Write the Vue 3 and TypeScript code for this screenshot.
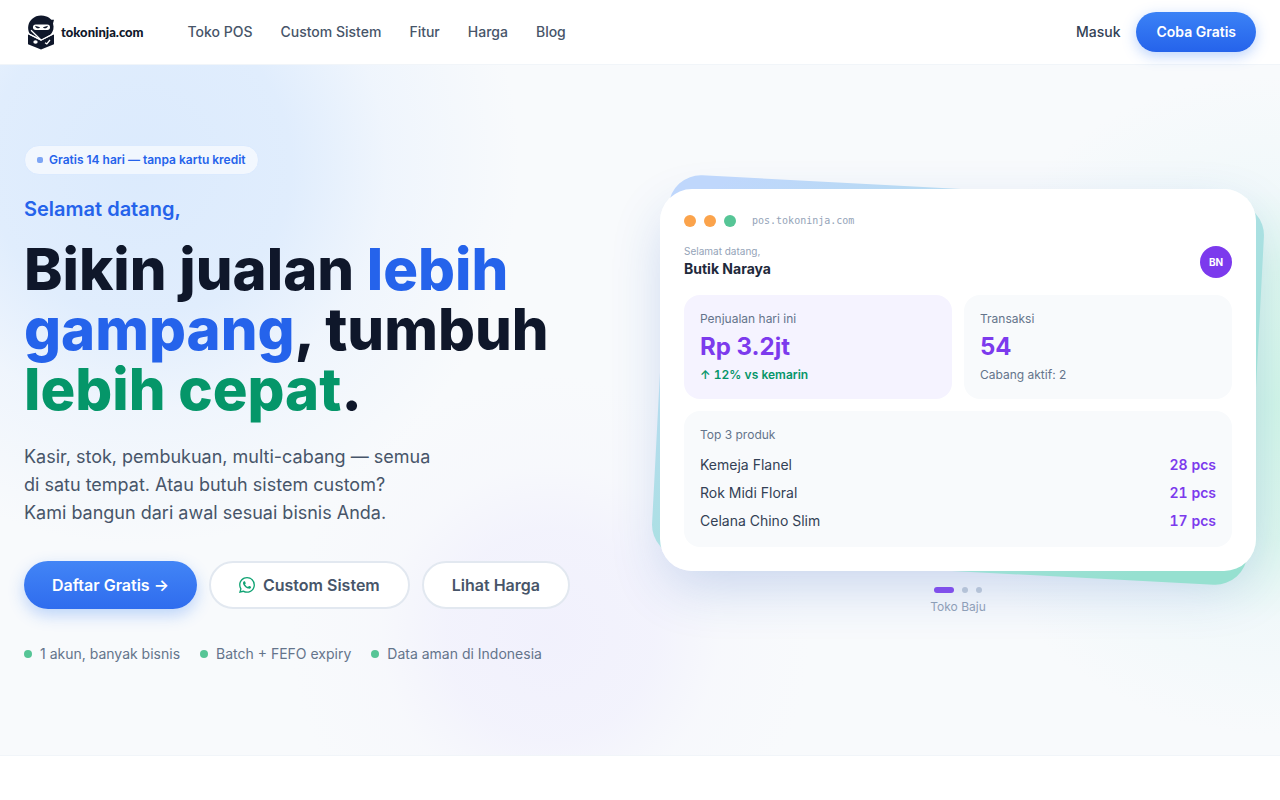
<script setup lang="ts">
interface Product {
  name: string
  sold: number
}

const navLinks: string[] = ['Toko POS', 'Custom Sistem', 'Fitur', 'Harga', 'Blog']
const perks: string[] = ['1 akun, banyak bisnis', 'Batch + FEFO expiry', 'Data aman di Indonesia']
const products: Product[] = [
  { name: 'Kemeja Flanel', sold: 28 },
  { name: 'Rok Midi Floral', sold: 21 },
  { name: 'Celana Chino Slim', sold: 17 },
]
const slides: string[] = ['Toko Baju', 'Slide 2', 'Slide 3']
</script>

<template>
  <div class="page">
    <header class="header">
      <div class="container header-row">
        <a class="logo" href="#">
          <svg class="logo-mark" viewBox="0 0 34 36" aria-hidden="true">
            <path fill="#0f172a" d="M5.500 19.500C3 14.500 4 8.500 8 5c4-3.600 9.500-4.400 14.500-2.400 1.800.700 3.500 1.800 4.800 3.200l2.700 0-1 3.600c1.300 4 .300 8-2.300 11L17.500 25.500z" />
            <rect x="9" y="10.500" width="17" height="5.400" rx="2.700" fill="#fff" />
            <path fill="#0f172a" d="M11 11.800l5 1.400c-.700 1.700-4 1.700-5-1.400zM24 11.800l-5 1.400c.700 1.700 4 1.700 5-1.400z" />
            <path fill="#0f172a" d="M4 20.200 17 26.800v8.700L4 30.200z" />
            <path fill="#0f172a" d="M30 20.200 17 26.800v8.700l13-5.300z" />
            <path fill="none" stroke="#fff" stroke-width="1.200" d="M3 19 17 26.200 31 19M7 16.200 17 26" />
            <ellipse cx="11.500" cy="28" rx="2.200" ry="1.700" fill="#fff" />
            <path fill="none" stroke="#fff" stroke-width="1.300" d="m21 28.800 1.800 1 3.200-3.800" />
          </svg>
          <span class="logo-text">tokoninja.com</span>
        </a>
        <nav class="nav" aria-label="Utama">
          <a v-for="link in navLinks" :key="link" href="#">{{ link }}</a>
        </nav>
        <div class="account">
          <a class="login" href="#">Masuk</a>
          <a class="trial" href="#">Coba Gratis</a>
        </div>
      </div>
    </header>

    <main class="hero">
      <div class="glow glow-blue"></div>
      <div class="glow glow-violet"></div>
      <div class="glow glow-green"></div>
      <div class="container hero-grid">
        <section class="intro">
          <p class="badge"><span class="badge-dot"></span>Gratis 14 hari — tanpa kartu kredit</p>
          <p class="welcome">Selamat datang,</p>
          <h1>
            Bikin jualan <span class="blue">lebih gampang</span>, tumbuh
            <span class="green">lebih cepat</span>.
          </h1>
          <p class="lead">
            Kasir, stok, pembukuan, multi-cabang — semua<br />
            di satu tempat. Atau butuh sistem custom?<br />
            Kami bangun dari awal sesuai bisnis Anda.
          </p>
          <div class="actions">
            <a class="btn primary" href="#">Daftar Gratis →</a>
            <a class="btn outline" href="#">
              <svg class="wa" viewBox="0 0 24 24" fill="#10a373" aria-hidden="true">
                <path d="M17.472 14.382c-.297-.149-1.758-.867-2.030-.967-.273-.099-.471-.148-.670.150-.197.297-.767.966-.940 1.164-.173.199-.347.223-.644.075-.297-.150-1.255-.463-2.390-1.475-.883-.788-1.480-1.761-1.653-2.059-.173-.297-.018-.458.130-.606.134-.133.298-.347.446-.520.149-.174.198-.298.298-.497.099-.198.050-.371-.025-.520-.075-.149-.669-1.612-.916-2.207-.242-.579-.487-.500-.669-.510-.173-.008-.371-.010-.570-.010-.198 0-.520.074-.792.372-.272.297-1.040 1.016-1.040 2.479 0 1.462 1.065 2.875 1.213 3.074.149.198 2.096 3.200 5.077 4.487.709.306 1.262.489 1.694.625.712.227 1.360.195 1.871.118.571-.085 1.758-.719 2.006-1.413.248-.694.248-1.289.173-1.413-.074-.124-.272-.198-.570-.347m-5.421 7.403h-.004a9.870 9.870 0 01-5.031-1.378l-.361-.214-3.741.982.998-3.648-.235-.374a9.860 9.860 0 01-1.510-5.260c.001-5.450 4.436-9.884 9.888-9.884 2.640 0 5.122 1.030 6.988 2.898a9.825 9.825 0 012.893 6.994c-.003 5.450-4.437 9.884-9.885 9.884m8.413-18.297A11.815 11.815 0 0012.050 0C5.495 0 .160 5.335.157 11.892c0 2.096.547 4.142 1.588 5.945L.057 24l6.305-1.654a11.882 11.882 0 005.683 1.448h.005c6.554 0 11.890-5.335 11.893-11.893a11.821 11.821 0 00-3.480-8.413z" />
              </svg>
              Custom Sistem
            </a>
            <a class="btn outline" href="#">Lihat Harga</a>
          </div>
          <ul class="perks">
            <li v-for="perk in perks" :key="perk">{{ perk }}</li>
          </ul>
        </section>

        <section class="showcase" aria-label="Contoh kasir">
          <div class="stack">
            <div class="backdrop"></div>
            <div class="card">
              <div class="window-bar">
                <i class="orange"></i><i class="orange"></i><i class="mint"></i>
                <span class="address">pos.tokoninja.com</span>
              </div>
              <div class="shop">
                <div>
                  <p class="shop-hello">Selamat datang,</p>
                  <p class="shop-name">Butik Naraya</p>
                </div>
                <span class="avatar">BN</span>
              </div>
              <div class="stats">
                <div class="panel lilac">
                  <p class="label">Penjualan hari ini</p>
                  <p class="value">Rp 3.2jt</p>
                  <p class="label up">↑ 12% vs kemarin</p>
                </div>
                <div class="panel">
                  <p class="label">Transaksi</p>
                  <p class="value">54</p>
                  <p class="label">Cabang aktif: 2</p>
                </div>
              </div>
              <div class="panel">
                <p class="label">Top 3 produk</p>
                <ul class="products">
                  <li v-for="product in products" :key="product.name">
                    <span>{{ product.name }}</span>
                    <strong>{{ product.sold }} pcs</strong>
                  </li>
                </ul>
              </div>
            </div>
          </div>
          <div class="pager">
            <button
              v-for="(slide, i) in slides"
              :key="slide"
              type="button"
              :class="{ active: i === 0 }"
              :aria-label="slide"
            ></button>
          </div>
          <p class="caption">{{ slides[0] }}</p>
        </section>
      </div>
    </main>
  </div>
</template>

<style>
body {
  margin: 0;
  background: #fff;
}
</style>

<style scoped>
.page {
  font-family: Inter, 'Liberation Sans', sans-serif;
  color: #0f172a;
  font-size: 14px;
  line-height: 20px;
}
.page * {
  box-sizing: border-box;
}
p,
h1,
ul {
  margin: 0;
  padding: 0;
  list-style: none;
}
a {
  color: inherit;
  text-decoration: none;
}
.container {
  max-width: 1280px;
  margin: 0 auto;
  padding: 0 24px;
}
.header {
  position: relative;
  z-index: 2;
  border-bottom: 1px solid #f1f5f9;
}
.header-row {
  display: flex;
  align-items: center;
  height: 64px;
}
.logo {
  display: flex;
  align-items: center;
  gap: 3px;
}
.logo-mark {
  width: 34px;
  height: 36px;
}
.logo-text {
  font-family: Lato, sans-serif;
  font-weight: 900;
  font-size: 13px;
}
.nav {
  display: flex;
  gap: 28px;
  margin-left: 44px;
  font-weight: 500;
  color: #475569;
}
.account {
  display: flex;
  align-items: center;
  gap: 16px;
  margin-left: auto;
}
.login {
  font-weight: 500;
  color: #334155;
}
.trial {
  padding: 10px 20px;
  border-radius: 20px;
  font-weight: 600;
  color: #fff;
  background: linear-gradient(#3b82f6, #2563eb);
  box-shadow: 0 4px 14px rgba(59, 130, 246, 0.35);
}
.hero {
  position: relative;
  overflow: hidden;
  padding: 80px 0;
  background: #f8fafc;
  border-bottom: 1px solid #f1f5f9;
}
.glow {
  position: absolute;
  border-radius: 50%;
}
.glow-blue {
  left: -240px;
  top: -280px;
  width: 760px;
  height: 760px;
  background: radial-gradient(closest-side, rgba(191, 219, 254, 0.5), rgba(191, 219, 254, 0.42) 40%, rgba(219, 234, 254, 0.3) 65%, rgba(219, 234, 254, 0));
}
.glow-violet {
  left: 290px;
  top: 310px;
  width: 520px;
  height: 520px;
  background: radial-gradient(closest-side, rgba(221, 214, 254, 0.26), rgba(221, 214, 254, 0.2) 40%, rgba(237, 233, 254, 0.1) 65%, rgba(237, 233, 254, 0));
}
.glow-green {
  right: -320px;
  top: 10px;
  width: 660px;
  height: 660px;
  background: radial-gradient(closest-side, rgba(167, 243, 208, 0.46), rgba(167, 243, 208, 0.32) 40%, rgba(204, 240, 241, 0.16) 65%, rgba(224, 242, 254, 0));
}
.hero-grid {
  position: relative;
  display: grid;
  grid-template-columns: 1fr 1fr;
  gap: 40px;
  align-items: center;
}
.intro {
  padding-bottom: 11px;
}
.badge {
  display: inline-flex;
  align-items: center;
  gap: 6px;
  padding: 6px 12px;
  border: 1px solid #dbeafe;
  border-radius: 15px;
  background: rgba(255, 255, 255, 0.6);
  color: #2563eb;
  font-size: 12px;
  line-height: 16px;
  font-weight: 600;
}
.badge-dot {
  width: 6px;
  height: 6px;
  border-radius: 2px;
  background: #7da5f5;
}
.welcome {
  margin-top: 20px;
  color: #2563eb;
  font-size: 20px;
  line-height: 28px;
  font-weight: 600;
}
h1 {
  margin-top: 16px;
  font-size: 58px;
  line-height: 60px;
  font-weight: 800;
}
.blue {
  color: #2563eb;
}
.green {
  color: #059669;
}
.lead {
  margin-top: 24px;
  color: #475569;
  font-size: 18px;
  line-height: 28px;
}
.actions {
  display: flex;
  gap: 12px;
  margin-top: 34px;
}
.btn {
  display: inline-flex;
  align-items: center;
  gap: 8px;
  height: 48px;
  padding: 0 28px;
  border-radius: 24px;
  font-size: 16px;
  line-height: 24px;
  font-weight: 600;
  white-space: nowrap;
}
.primary {
  color: #fff;
  background: linear-gradient(#4285f6, #2f6cee);
  box-shadow: 0 6px 16px rgba(59, 130, 246, 0.32);
}
.outline {
  border: 2px solid #e2e8f0;
  background: #fff;
  color: #475569;
}
.wa {
  width: 16px;
  height: 16px;
}
.perks {
  display: flex;
  gap: 20px;
  margin-top: 35px;
  color: #64748b;
}
.perks li {
  display: flex;
  align-items: center;
  gap: 8px;
}
.perks li::before {
  content: '';
  width: 8px;
  height: 8px;
  border-radius: 50%;
  background: #56c596;
}
.showcase {
  padding-bottom: 16px;
}
.stack {
  position: relative;
  border-radius: 32px;
  box-shadow: 0 20px 56px -8px rgba(29, 84, 190, 0.24);
}
.backdrop {
  position: absolute;
  inset: 0;
  border-radius: 32px;
  background: linear-gradient(to bottom right, #bfd7fc 5%, #abe0e3 50%, #96e0d0 90%);
  transform: rotate(3deg);
}
.card {
  position: relative;
  padding: 24px;
  border-radius: 32px;
  background: #fff;
}
.window-bar {
  display: flex;
  align-items: center;
  gap: 8px;
}
.window-bar i {
  width: 12px;
  height: 12px;
  border-radius: 50%;
}
.orange {
  background: #fba34b;
}
.mint {
  background: #56c596;
}
.address {
  margin-left: 8px;
  color: #94a3b8;
  font-family: 'DejaVu Sans Mono', monospace;
  font-size: 10px;
  line-height: 15px;
}
.shop {
  display: flex;
  align-items: center;
  justify-content: space-between;
  margin: 16px 0;
}
.shop-hello {
  color: #94a3b8;
  font-size: 10px;
  line-height: 15px;
}
.shop-name {
  color: #1e293b;
  font-weight: 700;
}
.avatar {
  width: 32px;
  height: 32px;
  border-radius: 50%;
  background: #7c3aed;
  color: #fff;
  font-size: 10px;
  line-height: 32px;
  font-weight: 700;
  text-align: center;
}
.stats {
  display: grid;
  grid-template-columns: 1fr 1fr;
  gap: 12px;
  margin-bottom: 12px;
}
.panel {
  padding: 16px;
  border-radius: 16px;
  background: #f8fafc;
}
.lilac {
  background: #f5f3ff;
}
.label {
  color: #64748b;
  font-size: 12px;
  line-height: 16px;
}
.up {
  color: #059669;
  font-weight: 600;
  font-variant-numeric: tabular-nums;
}
.value {
  margin: 4px 0;
  color: #7c3aed;
  font-size: 24px;
  line-height: 32px;
  font-weight: 700;
}
.products {
  display: grid;
  gap: 8px;
  margin-top: 12px;
}
.products li {
  display: flex;
  justify-content: space-between;
  color: #334155;
}
.products strong {
  color: #7c3aed;
  font-weight: 600;
  font-variant-numeric: tabular-nums;
}
.pager {
  display: flex;
  justify-content: center;
  gap: 8px;
  margin-top: 16px;
}
.pager button {
  width: 6px;
  height: 6px;
  padding: 0;
  border: 0;
  border-radius: 3px;
  background: #c5cfdb;
}
.pager .active {
  width: 20px;
  background: #8b50f0;
}
.caption {
  margin-top: 6px;
  color: #94a3b8;
  font-size: 12px;
  line-height: 16px;
  text-align: center;
}
</style>
